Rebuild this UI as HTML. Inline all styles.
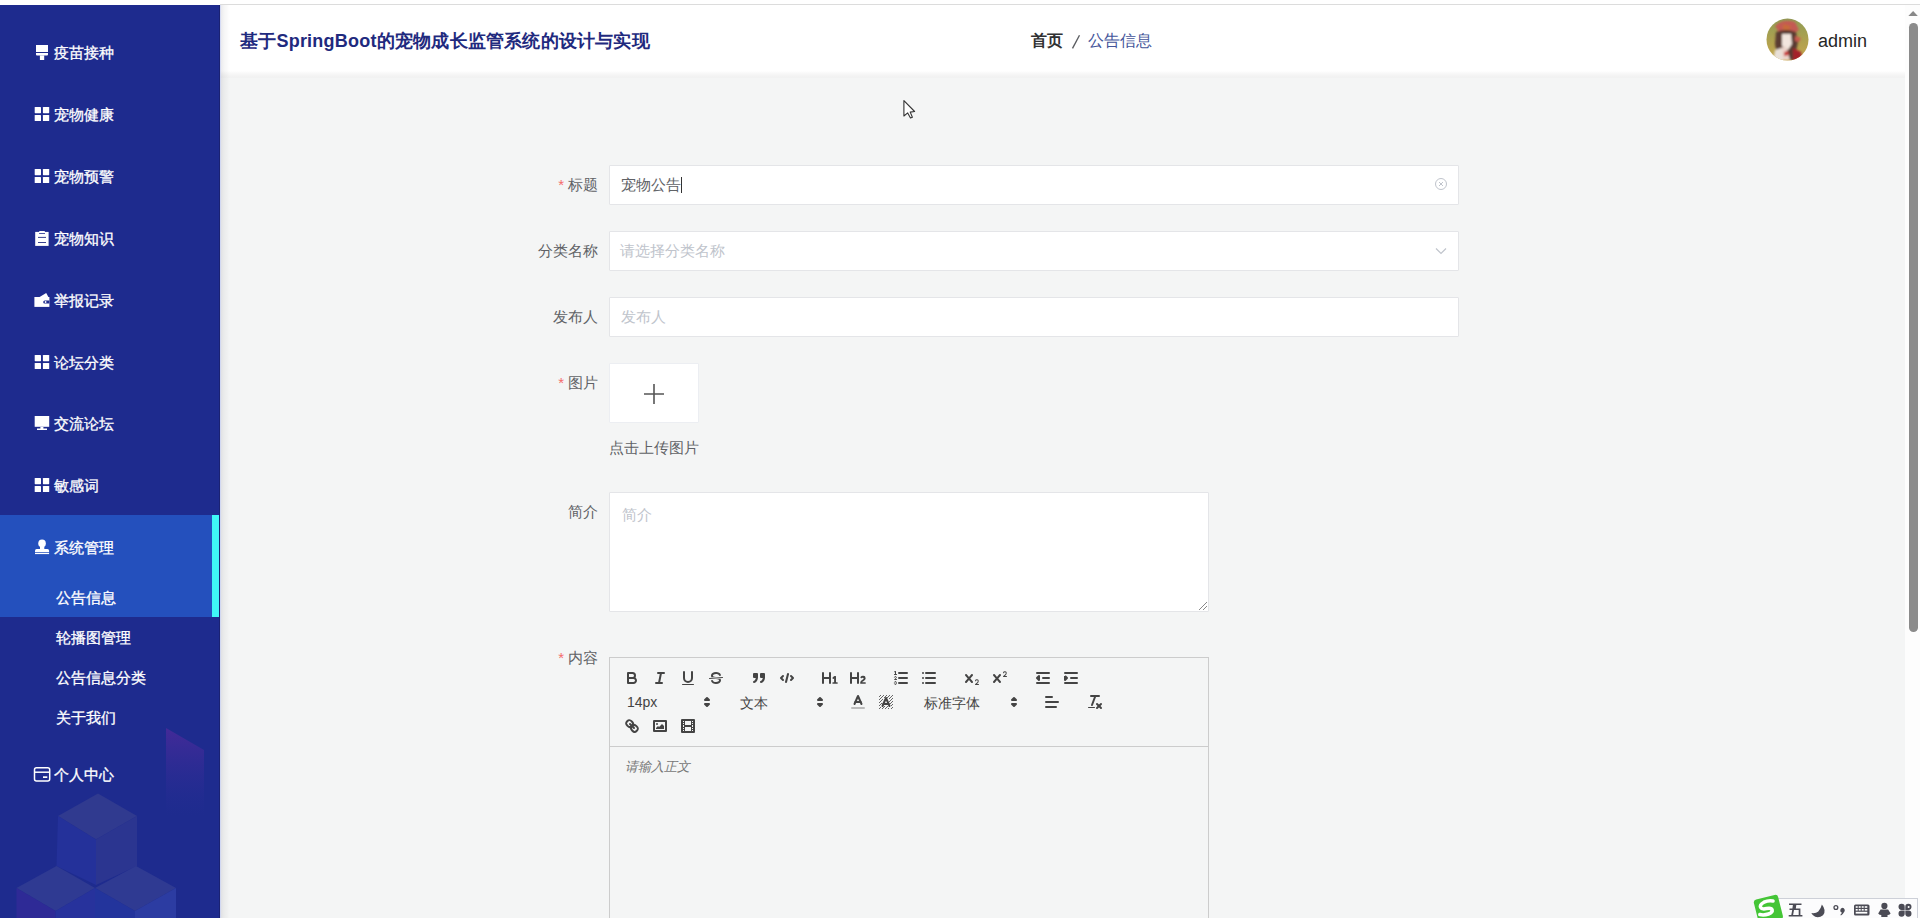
<!DOCTYPE html>
<html><head><meta charset="utf-8">
<style>
*{box-sizing:border-box;margin:0;padding:0}
html,body{width:1920px;height:918px;overflow:hidden;background:#fff;font-family:"Liberation Sans",sans-serif}
#top{position:absolute;left:0;top:0;width:1920px;height:5px;background:#fff}
#topline{position:absolute;left:220px;top:4px;width:1700px;height:1px;background:#dcdcdc}
#sedge{position:absolute;left:219px;top:5px;width:1px;height:913px;background:#1b2272}
#sedge2{position:absolute;left:220px;top:5px;width:1px;height:913px;background:rgba(200,210,250,.6);z-index:6}
#side{position:absolute;left:0;top:5px;width:220px;height:913px;background:#1e2b8e;overflow:hidden}
#main{position:absolute;left:220px;top:5px;width:1686px;height:913px;background:#f4f5f5;overflow:hidden}
#hdr{position:absolute;left:0;top:0;width:1686px;height:73px;background:linear-gradient(#fff 0,#fff 66px,#f9f9f9 68px,#f3f3f3 71px,#f1f2f2 73px)}
#shadow{position:absolute;left:0;top:0;width:10px;height:913px;z-index:5;background:linear-gradient(to right,rgba(20,20,60,.10),rgba(0,0,0,.04) 40%,rgba(0,0,0,0))}
#sb{position:absolute;left:1905px;top:5px;width:15px;height:913px;background:#fdfdfd}
.mi{position:absolute;left:0;width:220px;color:#fff;font-size:15px;line-height:20px;height:20px;-webkit-text-stroke:.3px #fff}
.mi svg{position:absolute;left:32px;top:0}
.mi .tx{position:absolute;left:54px;top:1px}
.sub{position:absolute;margin-top:1px;left:56px;color:#fff;font-size:15px;line-height:20px;-webkit-text-stroke:.3px #fff}
.lbl{position:absolute;width:120px;text-align:right;font-size:15px;color:#606266;line-height:20px}
.lbl b{color:#f56c6c;font-weight:normal;margin-right:4px}
.inp{position:absolute;background:#fff;border:1px solid #e4e5e8;border-radius:1px}
.ph{position:absolute;font-size:15px;color:#c0c4cc;line-height:20px}
.qi{position:absolute}
.qp{position:absolute;font-size:14px;line-height:24px;color:#444;font-weight:500}
</style></head><body>
<div id="top"></div><div id="topline"></div>
<div id="side">
  <svg width="220" height="913" style="position:absolute;left:0;top:0">
    <defs>
      <linearGradient id="slab" x1="0" y1="0" x2="0" y2="1">
        <stop offset="0" stop-color="#4a2a9a" stop-opacity=".85"/>
        <stop offset="1" stop-color="#2a2e98" stop-opacity="0"/>
      </linearGradient>
    </defs>
    <polygon points="166,723 204,745 204,810 166,810" fill="url(#slab)"/>
    <polygon points="58,811 98,788.5 137,811 96,834.5" fill="#303a8f"/>
    <polygon points="58,811 96,834.5 96,880 56.5,861" fill="#24319a"/>
    <polygon points="96,834.5 137,811 137,861 96,880" fill="#2b3590"/>
    <polygon points="16.5,883 56.5,861 95,883 55.6,906" fill="#2f3a92"/>
    <polygon points="16.5,883 55.6,906 55.6,913 16.5,913" fill="#2e2a96"/>
    <polygon points="55.6,906 95,883 95,913 55.6,913" fill="#27329c"/>
    <polygon points="95,883 136,861 176,883 135,906" fill="#2f3a92"/>
    <polygon points="95,883 135,906 135,913 95,913" fill="#23349c"/>
    <polygon points="135,906 176,883 176,913 135,913" fill="#2c3ca2"/>
  </svg>
    <div class="mi" style="top:37px"><svg width="20" height="20" viewBox="0 0 20 20"><rect x="4" y="3" width="12" height="7" fill="#fff"/><path d="M4 10.9h12v1.7q0 1-1 1H5q-1 0-1-1z" fill="#fff"/><rect x="7.9" y="13.4" width="4.3" height="4.6" fill="#fff"/></svg><span class="tx">疫苗接种</span></div>
  <div class="mi" style="top:99px"><svg width="20" height="20" viewBox="0 0 20 20"><rect x="2.7" y="3" width="6.3" height="6.2" rx=".6" fill="#fff"/><rect x="10.9" y="3" width="6.3" height="6.2" rx=".6" fill="#fff"/><rect x="2.7" y="10.9" width="6.3" height="6.2" rx=".6" fill="#fff"/><rect x="10.9" y="10.9" width="6.3" height="6.2" rx=".6" fill="#fff"/></svg><span class="tx">宠物健康</span></div>
  <div class="mi" style="top:161px"><svg width="20" height="20" viewBox="0 0 20 20"><rect x="2.7" y="3" width="6.3" height="6.2" rx=".6" fill="#fff"/><rect x="10.9" y="3" width="6.3" height="6.2" rx=".6" fill="#fff"/><rect x="2.7" y="10.9" width="6.3" height="6.2" rx=".6" fill="#fff"/><rect x="10.9" y="10.9" width="6.3" height="6.2" rx=".6" fill="#fff"/></svg><span class="tx">宠物预警</span></div>
  <div class="mi" style="top:223px"><svg width="20" height="20" viewBox="0 0 20 20"><rect x="3.2" y="3.9" width="13.4" height="14" fill="#fff"/><rect x="7.1" y="2.9" width="5.9" height="2.6" rx=".8" fill="#fff"/><path d="M7.1 5.5h5.9" stroke="#1e2b8e" stroke-width=".8"/><path d="M6 9.4h8M6 14.5h8" stroke="#3a4290" stroke-width="1"/></svg><span class="tx">宠物知识</span></div>
  <div class="mi" style="top:285px"><svg width="20" height="20" viewBox="0 0 20 20"><rect x="2.4" y="7" width="15" height="9.9" fill="#fff"/><path d="M7.6 7L14.2 3L16.4 7z" fill="#fff"/><path d="M17.4 10.4h-4.6q-1.6 0-1.6 1.6t1.6 1.6h4.6z" fill="#1e2b8e"/><circle cx="13.6" cy="12" r=".9" fill="#fff"/></svg><span class="tx">举报记录</span></div>
  <div class="mi" style="top:347px"><svg width="20" height="20" viewBox="0 0 20 20"><rect x="2.7" y="3" width="6.3" height="6.2" rx=".6" fill="#fff"/><rect x="10.9" y="3" width="6.3" height="6.2" rx=".6" fill="#fff"/><rect x="2.7" y="10.9" width="6.3" height="6.2" rx=".6" fill="#fff"/><rect x="10.9" y="10.9" width="6.3" height="6.2" rx=".6" fill="#fff"/></svg><span class="tx">论坛分类</span></div>
  <div class="mi" style="top:408px"><svg width="20" height="20" viewBox="0 0 20 20"><rect x="2.7" y="3" width="14.5" height="10.8" fill="#fff"/><path d="M8.4 14.1h3v1.4h3.6v1.5H5v-1.5h3.4z" fill="#fff"/></svg><span class="tx">交流论坛</span></div>
  <div class="mi" style="top:470px"><svg width="20" height="20" viewBox="0 0 20 20"><rect x="2.7" y="3" width="6.3" height="6.2" rx=".6" fill="#fff"/><rect x="10.9" y="3" width="6.3" height="6.2" rx=".6" fill="#fff"/><rect x="2.7" y="10.9" width="6.3" height="6.2" rx=".6" fill="#fff"/><rect x="10.9" y="10.9" width="6.3" height="6.2" rx=".6" fill="#fff"/></svg><span class="tx">敏感词</span></div>
  <div style="position:absolute;left:0;top:510px;width:220px;height:102px;background:#2450bd"></div>
  <div style="position:absolute;left:212px;top:510px;width:8px;height:102px;background:#3ff7f7"></div>
  <div class="mi" style="top:532px"><svg width="20" height="20" viewBox="0 0 20 20"><circle cx="10.05" cy="6.4" r="3.8" fill="#fff"/><rect x="8" y="8.5" width="4.3" height="4" fill="#fff"/><path d="M3 15.3v-1.6q0-1.7 1.7-1.7h10.7q1.7 0 1.7 1.7v1.6z" fill="#fff"/><rect x="3" y="16" width="14.1" height="1.1" fill="#fff"/></svg><span class="tx">系统管理</span></div>
  <div class="sub" style="top:582px">公告信息</div>
  <div class="sub" style="top:622px">轮播图管理</div>
  <div class="sub" style="top:662px">公告信息分类</div>
  <div class="sub" style="top:702px">关于我们</div>
  <div class="mi" style="top:759px"><svg width="20" height="20" viewBox="0 0 20 20"><rect x="2.5" y="3.7" width="15.2" height="13.4" rx="2" fill="none" stroke="#fff" stroke-width="1.5"/><path d="M2.5 8.2h15.2" stroke="#fff" stroke-width="1.5"/><rect x="11" y="12.3" width="4.3" height="1.7" fill="#fff"/></svg><span class="tx">个人中心</span></div>
</div>
<div id="main">
  <div id="hdr">
    <div style="position:absolute;left:20px;top:25px;font-size:18px;font-weight:bold;color:#1f2a7e;line-height:22px;letter-spacing:.22px">基于SpringBoot的宠物成长监管系统的设计与实现</div>
    <div style="position:absolute;left:811px;top:26px;font-size:16px;line-height:20px;color:#303133"><b>首页</b><span style="display:inline-block;width:25.45px;height:17px;position:relative;vertical-align:top"><svg width="26" height="20" style="position:absolute;left:0;top:0"><path d="M9.5 17.4L16.5 4.2" stroke="#5a5c60" stroke-width="1.35"/></svg></span><span style="color:#44559a">公告信息</span></div>
    <svg width="44" height="44" style="position:absolute;left:1545px;top:13px" viewBox="0 0 44 44">
      <defs><clipPath id="avc"><circle cx="22.5" cy="21.6" r="21"/></clipPath>
      <filter id="avb" x="-20%" y="-20%" width="140%" height="140%"><feGaussianBlur stdDeviation="1"/></filter>
      <linearGradient id="avg" x1="0" y1="0" x2="0" y2="1"><stop offset="0" stop-color="#8e9c55"/><stop offset=".6" stop-color="#b4a24e"/><stop offset="1" stop-color="#c8a850"/></linearGradient></defs>
      <g clip-path="url(#avc)">
        <rect x="0" y="0" width="44" height="44" fill="url(#avg)"/>
        <g filter="url(#avb)">
        <path d="M10 8q8-8 20-4l4 8-6 4-14-2z" fill="#c45a52"/>
        <path d="M18 6l8 2-2 5-6-1z" fill="#c76a3a"/>
        <path d="M11 14q10-4 20 0l2 10-4 18H13l-3-16z" fill="#5a3a30"/>
        <path d="M17 16h9l1 10-4 6-6-4z" fill="#f2e6de"/>
        <path d="M16 30l5-2 4 14h-9z" fill="#ecd6cc"/>
        <path d="M28 30l8 4 2 10H28z" fill="#a4202a"/>
        <path d="M10 32l6-2 2 14H8z" fill="#e8e0d8"/>
        <path d="M19 34l4-1 1 4-5 1z" fill="#c83a3a"/>
        <path d="M30 18l6 2-2 4-4-1z" fill="#c85a50"/>
        </g>
      </g>
    </svg>
    <div style="position:absolute;left:1598px;top:25px;font-size:18px;line-height:22px;color:#262626">admin</div>
  </div>
  <div id="shadow"></div>
  <!-- cursor -->
  <svg width="18" height="22" style="position:absolute;left:682px;top:94px" viewBox="0 0 18 22"><path d="M1.9,1.6 L1.9,17 L5.7,13.9 L8.5,19 L10.4,18.2 L8.2,13.1 L12.6,12.5 Z" fill="#fff" stroke="#333" stroke-width="1.1" stroke-linejoin="round"/></svg>

  <!-- form -->
  <div class="lbl" style="left:258px;top:170px"><b>*</b>标题</div>
  <div class="inp" style="left:389px;top:160px;width:850px;height:40px"></div>
  <div style="position:absolute;left:401px;top:170px;font-size:15px;line-height:20px;color:#606266">宠物公告<span style="display:inline-block;width:1px;height:16px;background:#333;vertical-align:-3px"></span></div>
  <svg width="14" height="14" style="position:absolute;left:1214px;top:172px" viewBox="0 0 14 14"><circle cx="7" cy="7" r="5.5" fill="none" stroke="#c0c4cc" stroke-width="1"/><path d="M5 5l4 4M9 5l-4 4" stroke="#c0c4cc" stroke-width="1"/></svg>

  <div class="lbl" style="left:258px;top:236px">分类名称</div>
  <div class="inp" style="left:389px;top:226px;width:850px;height:40px"></div>
  <div class="ph" style="left:400px;top:236px">请选择分类名称</div>
  <svg width="14" height="14" style="position:absolute;left:1214px;top:239px" viewBox="0 0 14 14"><path d="M2 4.5l5 5 5-5" fill="none" stroke="#c0c4cc" stroke-width="1.2"/></svg>

  <div class="lbl" style="left:258px;top:302px">发布人</div>
  <div class="inp" style="left:389px;top:292px;width:850px;height:40px"></div>
  <div class="ph" style="left:401px;top:302px">发布人</div>

  <div class="lbl" style="left:258px;top:368px"><b>*</b>图片</div>
  <div class="inp" style="left:389px;top:358px;width:90px;height:60px;border-color:#eceef2"></div>
  <svg width="22" height="22" style="position:absolute;left:423px;top:378px"><path d="M11 1v20M1 11h20" stroke="#555" stroke-width="1.6"/></svg>
  <div style="position:absolute;left:389px;top:433px;font-size:15px;line-height:20px;color:#606266">点击上传图片</div>

  <div class="lbl" style="left:258px;top:497px">简介</div>
  <div class="inp" style="left:389px;top:487px;width:600px;height:120px"></div>
  <div class="ph" style="left:402px;top:500px">简介</div>
  <svg width="10" height="10" style="position:absolute;left:978px;top:596px"><path d="M1 9l8-8M5 9l4-4" stroke="#888" stroke-width="1"/></svg>

  <div class="lbl" style="left:258px;top:643px"><b>*</b>内容</div>
  <div style="position:absolute;left:389px;top:652px;width:600px;height:300px;border:1px solid #ccc"></div>
  <div style="position:absolute;left:389px;top:741px;width:600px;height:1px;background:#ccc"></div>
<svg class="qi" style="left:403px;top:664px" width="18" height="18" viewBox="0 0 18 18"><path fill="none" stroke="#444" stroke-linecap="round" stroke-linejoin="round" stroke-width="2" d="M5,4H9.5A2.5,2.5,0,0,1,12,6.5v0A2.5,2.5,0,0,1,9.5,9H5A0,0,0,0,1,5,9V4A0,0,0,0,1,5,4Z"/><path fill="none" stroke="#444" stroke-linecap="round" stroke-linejoin="round" stroke-width="2" d="M5,9h5.5A2.5,2.5,0,0,1,13,11.5v0A2.5,2.5,0,0,1,10.5,14H5a0,0,0,0,1,0,0V9A0,0,0,0,1,5,9Z"/></svg>
<svg class="qi" style="left:431px;top:664px" width="18" height="18" viewBox="0 0 18 18"><line fill="none" stroke="#444" stroke-linecap="round" stroke-linejoin="round" stroke-width="2" x1="7" x2="13" y1="4" y2="4"/><line fill="none" stroke="#444" stroke-linecap="round" stroke-linejoin="round" stroke-width="2" x1="5" x2="11" y1="14" y2="14"/><line fill="none" stroke="#444" stroke-linecap="round" stroke-linejoin="round" stroke-width="2" x1="8" x2="10" y1="14" y2="4"/></svg>
<svg class="qi" style="left:459px;top:664px" width="18" height="18" viewBox="0 0 18 18"><path fill="none" stroke="#444" stroke-linecap="round" stroke-linejoin="round" stroke-width="2" d="M5,3V9a4.012,4.012,0,0,0,4,4H9a4.012,4.012,0,0,0,4-4V3"/><rect fill="#444" height="1" rx="0.5" ry="0.5" width="12" x="3" y="15"/></svg>
<svg class="qi" style="left:487px;top:664px" width="18" height="18" viewBox="0 0 18 18"><line fill="none" stroke="#444" stroke-linecap="round" stroke-linejoin="round" stroke-width="1" x1="15.5" x2="2.5" y1="8.5" y2="9.5"/><path fill="#444" d="M9.007,8C6.542,7.791,6,7.519,6,6.5,6,5.792,7.283,5,9,5c1.571,0,2.765.679,2.969,1.309a1,1,0,0,0,1.9-.617C13.356,4.106,11.354,3,9,3,6.2,3,4,4.538,4,6.5a3.2,3.2,0,0,0,.5,1.843Z"/><path fill="#444" d="M8.984,10C11.457,10.208,12,10.479,12,11.5c0,0.708-1.283,1.5-3,1.5-1.571,0-2.765-.679-2.969-1.309a1,1,0,1,0-1.9.617C4.644,13.894,6.646,15,9,15c2.8,0,5-1.538,5-3.5a3.2,3.2,0,0,0-.5-1.843Z"/></svg>
<svg class="qi" style="left:530px;top:664px" width="18" height="18" viewBox="0 0 18 18"><rect fill="#444" stroke="#444" stroke-width="2" stroke-linejoin="round" height="3" width="3" x="4" y="5"/><rect fill="#444" stroke="#444" stroke-width="2" stroke-linejoin="round" height="3" width="3" x="11" y="5"/><path fill="#444" stroke="#444" stroke-width="2" stroke-linecap="round" d="M7,8c0,4.031-3,5-3,5"/><path fill="#444" stroke="#444" stroke-width="2" stroke-linecap="round" d="M14,8c0,4.031-3,5-3,5"/></svg>
<svg class="qi" style="left:558px;top:664px" width="18" height="18" viewBox="0 0 18 18"><polyline fill="none" stroke="#444" stroke-linecap="round" stroke-linejoin="round" stroke-width="2" points="5 7 3 9 5 11"/><polyline fill="none" stroke="#444" stroke-linecap="round" stroke-linejoin="round" stroke-width="2" points="13 7 15 9 13 11"/><line fill="none" stroke="#444" stroke-linecap="round" stroke-linejoin="round" stroke-width="2" x1="10" x2="8" y1="5" y2="13"/></svg>
<svg class="qi" style="left:601px;top:664px" width="18" height="18" viewBox="0 0 18 18"><path fill="#444" d="M10,4V14a1,1,0,0,1-2,0V10H3v4a1,1,0,0,1-2,0V4A1,1,0,0,1,3,4V8H8V4a1,1,0,0,1,2,0Zm6.06787,9.209H14.98975V7.59863a.54085.54085,0,0,0-.605-.60547h-.62744a1.01119,1.01119,0,0,0-.748.29688L11.645,8.56641a.5435.5435,0,0,0-.022.8584l.28613.30762a.53861.53861,0,0,0,.84717.0332l.09912-.08789a1.2137,1.2137,0,0,0,.2417-.35254h.02246s-.01123.30859-.01123.60547V13.209H12.041a.54085.54085,0,0,0-.605.60547v.43945a.54085.54085,0,0,0,.605.60547h4.02686a.54085.54085,0,0,0,.605-.60547v-.43945A.54085.54085,0,0,0,16.06787,13.209Z"/></svg>
<svg class="qi" style="left:629px;top:664px" width="18" height="18" viewBox="0 0 18 18"><path fill="#444" d="M16.73975,13.81445v.43945a.54085.54085,0,0,1-.605.60547H11.855a.58392.58392,0,0,1-.64893-.60547V14.0127c0-2.90527,3.39941-3.42187,3.39941-4.55469a.77675.77675,0,0,0-.84717-.78125,1.17684,1.17684,0,0,0-.83594.38477c-.2749.26367-.561.374-.85791.13184l-.4292-.34082c-.30811-.24219-.38525-.51758-.1543-.81445a2.97155,2.97155,0,0,1,2.45361-1.17676,2.45393,2.45393,0,0,1,2.68408,2.40918c0,2.45312-3.1792,2.92676-3.27832,3.93848h2.79443A.54085.54085,0,0,1,16.73975,13.81445ZM9,3A.99974.99974,0,0,0,8,4V8H3V4A1,1,0,0,0,1,4V14a1,1,0,0,0,2,0V10H8v4a1,1,0,0,0,2,0V4A.99974.99974,0,0,0,9,3Z"/></svg>
<svg class="qi" style="left:672px;top:664px" width="18" height="18" viewBox="0 0 18 18"><line fill="none" stroke="#444" stroke-linecap="round" stroke-linejoin="round" stroke-width="2" x1="7" x2="15" y1="4" y2="4"/><line fill="none" stroke="#444" stroke-linecap="round" stroke-linejoin="round" stroke-width="2" x1="7" x2="15" y1="9" y2="9"/><line fill="none" stroke="#444" stroke-linecap="round" stroke-linejoin="round" stroke-width="2" x1="7" x2="15" y1="14" y2="14"/><line fill="none" stroke="#444" stroke-linecap="round" stroke-linejoin="round" stroke-width="1" x1="2.5" x2="4.5" y1="5.5" y2="5.5"/><path fill="#444" d="M3.5,6A0.5,0.5,0,0,1,3,5.5V3.085l-0.276.138A0.5,0.5,0,0,1,2.053,3c-0.124-.247-0.023-0.324.224-0.447l1-.5A0.5,0.5,0,0,1,4,2.5v3A0.5,0.5,0,0,1,3.5,6Z"/><path fill="none" stroke="#444" stroke-linecap="round" stroke-linejoin="round" stroke-width="1" d="M4.5,10.5h-2c0-.234,1.85-1.076,1.85-2.234A0.959,0.959,0,0,0,2.5,8.156"/><path fill="none" stroke="#444" stroke-linecap="round" stroke-linejoin="round" stroke-width="1" d="M2.5,14.846a0.959,0.959,0,0,0,1.85-.109A0.7,0.7,0,0,0,3.75,14a0.688,0.688,0,0,0,.6-0.736,0.959,0.959,0,0,0-1.85-.109"/></svg>
<svg class="qi" style="left:700px;top:664px" width="18" height="18" viewBox="0 0 18 18"><line fill="none" stroke="#444" stroke-linecap="round" stroke-linejoin="round" stroke-width="2" x1="6" x2="15" y1="4" y2="4"/><line fill="none" stroke="#444" stroke-linecap="round" stroke-linejoin="round" stroke-width="2" x1="6" x2="15" y1="9" y2="9"/><line fill="none" stroke="#444" stroke-linecap="round" stroke-linejoin="round" stroke-width="2" x1="6" x2="15" y1="14" y2="14"/><line fill="none" stroke="#444" stroke-linecap="round" stroke-linejoin="round" stroke-width="2" x1="3" x2="3" y1="4" y2="4"/><line fill="none" stroke="#444" stroke-linecap="round" stroke-linejoin="round" stroke-width="2" x1="3" x2="3" y1="9" y2="9"/><line fill="none" stroke="#444" stroke-linecap="round" stroke-linejoin="round" stroke-width="2" x1="3" x2="3" y1="14" y2="14"/></svg>
<svg class="qi" style="left:743px;top:664px" width="18" height="18" viewBox="0 0 18 18"><path fill="#444" d="M15.5,15H13.861a3.858,3.858,0,0,0,1.914-2.975,1.8,1.8,0,0,0-1.6-1.751A1.921,1.921,0,0,0,12.021,11.7a0.50013,0.50013,0,1,0,.957.291h0a0.914,0.914,0,0,1,1.053-.725,0.81,0.81,0,0,1,.744.762c0,1.076-1.16971,1.86982-1.93971,2.43082A1.45639,1.45639,0,0,0,12,15.5a0.5,0.5,0,0,0,.5.5h3A0.5,0.5,0,0,0,15.5,15Z"/><path fill="#444" d="M9.65,5.241a1,1,0,0,0-1.409.108L6,7.964,3.759,5.349A1,1,0,0,0,2.192,6.59178Q2.21541,6.6213,2.241,6.649L4.684,9.5,2.241,12.35A1,1,0,0,0,3.71,13.70722q0.02557-.02768.049-0.05722L6,11.036,8.241,13.65a1,1,0,1,0,1.567-1.24277Q9.78459,12.3777,9.759,12.35L7.316,9.5,9.759,6.651A1,1,0,0,0,9.65,5.241Z"/></svg>
<svg class="qi" style="left:771px;top:664px" width="18" height="18" viewBox="0 0 18 18"><path fill="#444" d="M15.5,7H13.861a4.015,4.015,0,0,0,1.914-2.975,1.8,1.8,0,0,0-1.6-1.751A1.922,1.922,0,0,0,12.021,3.7a0.5,0.5,0,1,0,.957.291,0.917,0.917,0,0,1,1.053-.725,0.81,0.81,0,0,1,.744.762c0,1.077-1.164,1.925-1.934,2.486A1.423,1.423,0,0,0,12,7.5a0.5,0.5,0,0,0,.5.5h3A0.5,0.5,0,0,0,15.5,7Z"/><path fill="#444" d="M9.651,5.241a1,1,0,0,0-1.41.108L6,7.964,3.759,5.349a1,1,0,1,0-1.519,1.3L4.683,9.5,2.241,12.35a1,1,0,1,0,1.519,1.3L6,11.036,8.241,13.65a1,1,0,0,0,1.519-1.3L7.317,9.5,9.759,6.651A1,1,0,0,0,9.651,5.241Z"/></svg>
<svg class="qi" style="left:814px;top:664px" width="18" height="18" viewBox="0 0 18 18"><line fill="none" stroke="#444" stroke-linecap="round" stroke-linejoin="round" stroke-width="2" x1="3" x2="15" y1="14" y2="14"/><line fill="none" stroke="#444" stroke-linecap="round" stroke-linejoin="round" stroke-width="2" x1="3" x2="15" y1="4" y2="4"/><line fill="none" stroke="#444" stroke-linecap="round" stroke-linejoin="round" stroke-width="2" x1="9" x2="15" y1="9" y2="9"/><polyline fill="none" stroke="#444" stroke-linecap="round" stroke-linejoin="round" stroke-width="2" points="5 7 5 11 3 9 5 7"/></svg>
<svg class="qi" style="left:842px;top:664px" width="18" height="18" viewBox="0 0 18 18"><line fill="none" stroke="#444" stroke-linecap="round" stroke-linejoin="round" stroke-width="2" x1="3" x2="15" y1="14" y2="14"/><line fill="none" stroke="#444" stroke-linecap="round" stroke-linejoin="round" stroke-width="2" x1="3" x2="15" y1="4" y2="4"/><line fill="none" stroke="#444" stroke-linecap="round" stroke-linejoin="round" stroke-width="2" x1="9" x2="15" y1="9" y2="9"/><polyline fill="#444" stroke="#444" stroke-width="2" stroke-linejoin="round" points="3 7 3 11 5 9 3 7"/></svg>
<div class="qp" style="left:407px;top:685px">14px</div>
<svg class="qi" style="left:478px;top:688px" width="18" height="18" viewBox="0 0 18 18"><polygon fill="#444" stroke="#444" stroke-width="2" stroke-linejoin="round" points="7 11 9 13 11 11 7 11"/><polygon fill="#444" stroke="#444" stroke-width="2" stroke-linejoin="round" points="7 7 9 5 11 7 7 7"/></svg>
<div class="qp" style="left:520px;top:686px">文本</div>
<svg class="qi" style="left:591px;top:688px" width="18" height="18" viewBox="0 0 18 18"><polygon fill="#444" stroke="#444" stroke-width="2" stroke-linejoin="round" points="7 11 9 13 11 11 7 11"/><polygon fill="#444" stroke="#444" stroke-width="2" stroke-linejoin="round" points="7 7 9 5 11 7 7 7"/></svg>
<svg class="qi" style="left:629px;top:688px" width="18" height="18" viewBox="0 0 18 18"><line fill="none" stroke="#444" stroke-linecap="round" stroke-linejoin="round" stroke-width="2" stroke="#444" x1="3" x2="15" y1="15" y2="15" style="stroke:#bbb"/><polyline fill="none" stroke="#444" stroke-linecap="round" stroke-linejoin="round" stroke-width="2" points="5.5 11 9 3 12.5 11"/><line fill="none" stroke="#444" stroke-linecap="round" stroke-linejoin="round" stroke-width="2" x1="11.63" x2="6.38" y1="9" y2="9"/></svg>
<svg class="qi" style="left:657px;top:688px" width="18" height="18" viewBox="0 0 18 18"><g fill="#444" opacity=".8"><rect height="1" width="1" x="4" y="4"/><rect height="1" width="1" x="2" y="6"/><rect height="1" width="1" x="3" y="5"/><rect height="1" width="1" x="4" y="7"/><rect height="1" width="1" x="2" y="12"/><rect height="1" width="1" x="2" y="9"/><rect height="1" width="1" x="2" y="15"/><rect height="1" width="1" x="3" y="8"/><rect height="1" width="1" x="12" y="2"/><rect height="1" width="1" x="11" y="3"/><rect height="1" width="1" x="2" y="3"/><rect height="1" width="1" x="6" y="2"/><rect height="1" width="1" x="3" y="2"/><rect height="1" width="1" x="5" y="3"/><rect height="1" width="1" x="9" y="2"/><rect height="1" width="1" x="15" y="14"/><rect height="1" width="1" x="13" y="7"/><rect height="1" width="1" x="15" y="5"/><rect height="1" width="1" x="14" y="6"/><rect height="1" width="1" x="15" y="8"/><rect height="1" width="1" x="14" y="9"/><rect height="1" width="1" x="14" y="3"/><rect height="1" width="1" x="15" y="2"/><rect height="1" width="1" x="12" y="5"/><rect height="1" width="1" x="13" y="4"/><rect height="1" width="1" x="9" y="14"/><rect height="1" width="1" x="8" y="15"/><rect height="1" width="1" x="5" y="15"/><rect height="1" width="1" x="11" y="15"/><rect height="1" width="1" x="14" y="15"/><rect height="1" width="1" x="15" y="11"/><rect height="1" width="1" x="5" y="6"/><rect height="1" width="1" x="3" y="11"/><rect height="1" width="1" x="4" y="10"/><rect height="1" width="1" x="3" y="14"/><rect height="1" width="1" x="6" y="14"/><rect height="1" width="1" x="10" y="13"/><rect height="1" width="1" x="14" y="12"/><rect height="1" width="1" x="13" y="10"/><rect height="1" width="1" x="12" y="8"/><rect height="1" width="1" x="7" y="13"/><rect height="1" width="1" x="8" y="3"/><rect height="1" width="1" x="10" y="4"/><rect height="1" width="1" x="7" y="4"/></g><polyline fill="none" stroke="#444" stroke-linecap="round" stroke-linejoin="round" stroke-width="2" points="5.5 13 9 5 12.5 13"/><line fill="none" stroke="#444" stroke-linecap="round" stroke-linejoin="round" stroke-width="2" x1="11.63" x2="6.38" y1="11" y2="11"/></svg>
<div class="qp" style="left:704px;top:686px">标准字体</div>
<svg class="qi" style="left:785px;top:688px" width="18" height="18" viewBox="0 0 18 18"><polygon fill="#444" stroke="#444" stroke-width="2" stroke-linejoin="round" points="7 11 9 13 11 11 7 11"/><polygon fill="#444" stroke="#444" stroke-width="2" stroke-linejoin="round" points="7 7 9 5 11 7 7 7"/></svg>
<svg class="qi" style="left:823px;top:688px" width="18" height="18" viewBox="0 0 18 18"><line fill="none" stroke="#444" stroke-linecap="round" stroke-linejoin="round" stroke-width="2" x1="3" x2="15" y1="9" y2="9"/><line fill="none" stroke="#444" stroke-linecap="round" stroke-linejoin="round" stroke-width="2" x1="3" x2="13" y1="14" y2="14"/><line fill="none" stroke="#444" stroke-linecap="round" stroke-linejoin="round" stroke-width="2" x1="3" x2="9" y1="4" y2="4"/></svg>
<svg class="qi" style="left:866px;top:688px" width="18" height="18" viewBox="0 0 18 18"><line fill="none" stroke="#444" stroke-linecap="round" stroke-linejoin="round" stroke-width="2" x1="5" x2="13" y1="3" y2="3"/><line fill="none" stroke="#444" stroke-linecap="round" stroke-linejoin="round" stroke-width="2" x1="6" x2="9.35" y1="12" y2="3"/><line fill="none" stroke="#444" stroke-linecap="round" stroke-linejoin="round" stroke-width="2" x1="11" x2="15" y1="11" y2="15"/><line fill="none" stroke="#444" stroke-linecap="round" stroke-linejoin="round" stroke-width="2" x1="15" x2="11" y1="11" y2="15"/><rect fill="#444" height="1" rx="0.5" ry="0.5" width="7" x="2" y="14"/></svg>
<svg class="qi" style="left:403px;top:712px" width="18" height="18" viewBox="0 0 18 18"><line fill="none" stroke="#444" stroke-linecap="round" stroke-linejoin="round" stroke-width="2" x1="7" x2="11" y1="7" y2="11"/><path fill="none" stroke="#444" stroke-linecap="round" stroke-linejoin="round" stroke-width="2" d="M8.9,4.577a3.476,3.476,0,0,1,.36,4.679A3.476,3.476,0,0,1,4.577,8.9C3.185,7.5,2.035,6.4,4.217,4.217S7.5,3.185,8.9,4.577Z"/><path fill="none" stroke="#444" stroke-linecap="round" stroke-linejoin="round" stroke-width="2" d="M13.423,9.1a3.476,3.476,0,0,0-4.679-.36,3.476,3.476,0,0,0,.36,4.679c1.392,1.392,2.5,2.542,4.679.36S14.815,10.5,13.423,9.1Z"/></svg>
<svg class="qi" style="left:431px;top:712px" width="18" height="18" viewBox="0 0 18 18"><rect fill="none" stroke="#444" stroke-linecap="round" stroke-linejoin="round" stroke-width="2" height="10" width="12" x="3" y="4"/><circle fill="#444" cx="6" cy="7" r="1"/><polyline fill="#444" points="5 12 5 11 7 9 8 10 11 7 13 9 13 12 5 12"/></svg>
<svg class="qi" style="left:459px;top:712px" width="18" height="18" viewBox="0 0 18 18"><rect fill="none" stroke="#444" stroke-linecap="round" stroke-linejoin="round" stroke-width="2" height="12" width="12" x="3" y="3"/><rect fill="#444" height="12" width="1" x="5" y="3"/><rect fill="#444" height="12" width="1" x="12" y="3"/><rect fill="#444" height="2" width="8" x="5" y="8"/><rect fill="#444" height="1" width="3" x="3" y="5"/><rect fill="#444" height="1" width="3" x="3" y="7"/><rect fill="#444" height="1" width="3" x="3" y="10"/><rect fill="#444" height="1" width="3" x="3" y="12"/><rect fill="#444" height="1" width="3" x="12" y="5"/><rect fill="#444" height="1" width="3" x="12" y="7"/><rect fill="#444" height="1" width="3" x="12" y="10"/><rect fill="#444" height="1" width="3" x="12" y="12"/></svg>
  <div style="position:absolute;left:405px;top:753px;font-size:13px;line-height:18px;color:#777;font-style:italic">请输入正文</div>
</div>

<div id="sedge"></div><div id="sedge2"></div>
<div id="sb">
  <svg width="15" height="20" style="position:absolute;left:1px;top:0"><path d="M2.4 11h9.4L7.1 6.1z" fill="#888"/></svg>
  <div style="position:absolute;left:3.8px;top:18px;width:8.8px;height:609px;border-radius:4.4px;background:#8b8b8b"></div>
</div>
<div id="ime" style="position:absolute;left:1740px;top:880px;width:180px;height:38px">
  <div style="position:absolute;left:37px;top:18px;width:141px;height:20px;background:#fcfcfd;border-top:1px solid #cdd0d8;border-right:1px solid #cdd0d8"></div>
  <svg width="180" height="38" style="position:absolute;left:0;top:0" viewBox="0 0 180 38">
    <g transform="rotate(-14 28 30)"><rect x="16" y="17" width="25" height="25" rx="3" fill="#44c536"/>
    <path d="M35 22.5q-4-2-9-1q-5 1.2-4.5 4.3q.5 2.3 5.5 2.5q5 .3 5 2.7q0 2.6-4.5 3t-8.5-1.5" fill="none" stroke="#fff" stroke-width="3.6" stroke-linecap="round"/></g>
    <g fill="#4b4b55">
      <path d="M49 23.5h12.5v1.6h-5.2l-.5 3.4h4.6v6.4h2v1.6H48.7v-1.6h2.6l.9-4.8h-2.7v-1.6h2.9l.5-3.4H49z M54 30.1l-.9 4.8h5.6v-4.8z"/>
      <path d="M81.9 24.4Q86.8 30.5 83 35.2Q79.5 38 75.2 36.8Q72.6 35.8 71.3 33.1Q75.8 33.8 78.3 31.5Q80.8 28.8 81.9 24.4z"/>
      <circle cx="95.9" cy="27.5" r="1.9" fill="none" stroke="#4b4b55" stroke-width="1.3"/>
      <path d="M102.5 27.8a2.5 2.5 0 0 1 1.6 4.2q-1 2.2-3.2 3.4l-.5-.6q1.2-1 1.4-2.2a2.5 2.5 0 0 1 .7-4.8z"/>
      <rect x="114" y="24.5" width="15.5" height="11" rx="1.5"/>
      <g fill="#fff"><rect x="115.7" y="26.2" width="2" height="1.6"/><rect x="118.7" y="26.2" width="2" height="1.6"/><rect x="121.7" y="26.2" width="2" height="1.6"/><rect x="124.7" y="26.2" width="2.6" height="1.6"/>
      <rect x="115.7" y="29" width="2" height="1.6"/><rect x="118.7" y="29" width="2" height="1.6"/><rect x="121.7" y="29" width="2" height="1.6"/><rect x="124.7" y="29" width="2.6" height="1.6"/>
      <rect x="115.7" y="31.8" width="11.6" height="1.8"/></g>
      <circle cx="144.4" cy="25.9" r="3.1"/>
      <path d="M140.6 29.4h7.5l2.5 4q-1.2 1.5-3.1 1.6v1.9h-6.2v-1.9q-1.9-.1-3.1-1.6z"/>
      <path d="M164.7 30V27A3.1 3.1 0 1 0 161.6 30Z M165.3 30V27A3.1 3.1 0 1 1 168.4 30Z M164.7 30.6V33.6A3.1 3.1 0 1 1 161.6 30.6Z M165.3 30.6V33.6A3.1 3.1 0 1 0 168.4 30.6Z"/>
      <circle cx="168.6" cy="26.9" r="1" fill="#fff"/>
    </g>
  </svg>
</div>
</body></html>
